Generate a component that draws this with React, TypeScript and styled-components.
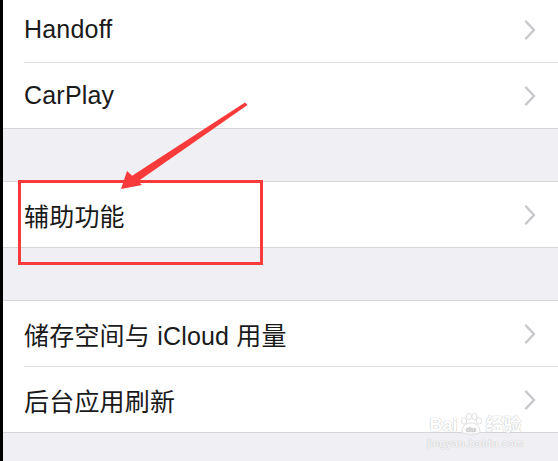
import styled, { createGlobalStyle } from 'styled-components';

const GlobalStyle = createGlobalStyle`
  html, body {
    margin: 0;
    padding: 0;
    background: #efeff4;
  }
  * {
    box-sizing: border-box;
  }
`;

type Item = { label: string };

const groups: Item[][] = [
  [{ label: 'Handoff' }, { label: 'CarPlay' }],
  [{ label: '辅助功能' }],
  [{ label: '储存空间与 iCloud 用量' }, { label: '后台应用刷新' }],
];

const Chevron = () => (
  <svg width="12" height="20" viewBox="0 0 12 20">
    <polyline
      points="2,1.5 10,10 2,18.5"
      fill="none"
      stroke="#c7c7cc"
      strokeWidth="2.4"
      strokeLinecap="round"
      strokeLinejoin="round"
    />
  </svg>
);

const App = () => {
  return (
    <Screen>
      <GlobalStyle />
      <Settings>
        {groups.map((group, gi) => (
          <Group key={gi} $first={gi === 0}>
            {group.map((item) => (
              <Row key={item.label}>
                <Label>{item.label}</Label>
                <Chevron />
              </Row>
            ))}
          </Group>
        ))}
      </Settings>

      <Highlight />
      <Arrow width="558" height="461" viewBox="0 0 558 461">
        <polygon points="245,102.5 247.5,105 137,182 131,176.5" fill="#f93a3a" />
        <polygon points="121,189 127,171 142,185" fill="#f93a3a" />
      </Arrow>

      <Watermark>
        <Brand>
          <span>Bai</span>
          <Paw>
            <svg width="26" height="24" viewBox="0 0 26 24">
              <g fill="#fff" stroke="#d6d6d6" strokeWidth="0.8">
                <ellipse cx="6" cy="9" rx="2.6" ry="3.2" />
                <ellipse cx="11" cy="4.5" rx="2.6" ry="3.2" />
                <ellipse cx="16.5" cy="4.5" rx="2.6" ry="3.2" />
                <ellipse cx="21" cy="9" rx="2.6" ry="3.2" />
                <path d="M4 20 C4 13 9 11 13 11 C17 11 22 13 22 20 C22 23 4 23 4 20 Z" />
              </g>
              <text x="13" y="20" textAnchor="middle" fontSize="8" fill="#d0d0d0" fontFamily="Liberation Sans, sans-serif" fontWeight="bold">du</text>
            </svg>
          </Paw>
          <span>经验</span>
        </Brand>
        <Domain>jingyan.baidu.com</Domain>
      </Watermark>
    </Screen>
  );
};

export default App;

const Screen = styled.div`
  position: relative;
  width: 558px;
  height: 461px;
  overflow: hidden;
  background: #efeff4;
  border-left: 3px solid #000;
  font-family: 'Liberation Sans', 'Noto Sans CJK SC', sans-serif;
`;

const Settings = styled.div`
  display: flex;
  flex-direction: column;
  gap: 52px;
`;

const Group = styled.section<{ $first?: boolean }>`
  background: #fff;
  border-top: ${(p) => (p.$first ? 'none' : '1px solid #d6d6da')};
  border-bottom: 1px solid #d6d6da;
  margin-top: ${(p) => (p.$first ? '-3px' : '0')};
  padding-left: 21px;
`;

const Row = styled.div`
  height: 66px;
  display: flex;
  align-items: center;
  justify-content: space-between;
  padding-right: 22px;
  border-bottom: 1px solid #e0e0e3;

  &:last-child {
    height: 65px;
    border-bottom: none;
  }
`;

const Label = styled.span`
  font-size: 25px;
  color: #1a1a1a;
  letter-spacing: 0.2px;
`;

const Highlight = styled.div`
  position: absolute;
  left: 15px;
  top: 180px;
  width: 245px;
  height: 85px;
  border: 3px solid #f93a3a;
`;

const Arrow = styled.svg`
  position: absolute;
  left: -3px;
  top: 0;
  pointer-events: none;
`;

const Watermark = styled.div`
  position: absolute;
  right: 34px;
  bottom: 12px;
  display: flex;
  flex-direction: column;
  align-items: center;
  color: #fff;
  opacity: 0.9;
  text-shadow: 0 0 1px #bdbdbd, 0 0 1px #bdbdbd;
`;

const Brand = styled.div`
  display: flex;
  align-items: flex-end;
  gap: 1px;
  font-size: 18px;
  font-weight: bold;
  line-height: 1;
`;

const Paw = styled.span`
  display: inline-flex;
  margin-bottom: -2px;
`;

const Domain = styled.div`
  margin-top: 3px;
  font-size: 11px;
  letter-spacing: 0.5px;
`;
